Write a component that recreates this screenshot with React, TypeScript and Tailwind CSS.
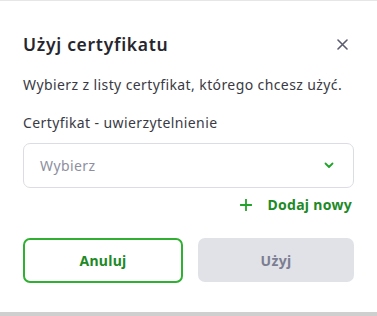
import React from "react";

const green = "#23a32b";

const CertificateModal: React.FC = () => {
  return (
    <div
      className="w-[377px] h-[316px] bg-white border-t border-[#e6e6e6] flex flex-col"
      style={{ fontFamily: "'Noto Sans', Lato, sans-serif" }}
    >
      <div className="flex-1 px-[23px] pt-[30px]">
        {/* Header */}
        <div className="flex items-center justify-between h-[26px]">
          <h1 className="text-[17.5px] font-semibold text-[#26262e] tracking-[0.7px]">Użyj certyfikatu</h1>
          <button className="w-[20px] h-[20px] flex items-center justify-center mr-[2px] text-[#5c5c70]">
            <svg width="11" height="11" viewBox="0 0 11 11" fill="none">
              <path d="M1 1L10 10M10 1L1 10" stroke="currentColor" strokeWidth="1.6" strokeLinecap="round" />
            </svg>
          </button>
        </div>

        <p className="mt-[19px] text-[14px] text-[#3a3a44] leading-[18px] tracking-[0.4px]">
          Wybierz z listy certyfikat, którego chcesz użyć.
        </p>

        <label className="block mt-[20px] text-[14px] text-[#3a3a44] leading-[18px] tracking-[0.4px]">
          Certyfikat - uwierzytelnienie
        </label>

        {/* Select */}
        <div className="mt-[11px] h-[45px] rounded-[7px] border border-[#dcdde3] flex items-center justify-between pl-[16px] pr-[19px]">
          <span className="text-[14px] text-[#8d8fa0] tracking-[0.4px]">Wybierz</span>
          <svg width="10" height="7" viewBox="0 0 10 7" fill="none">
            <path d="M1.5 1.5L5 5L8.5 1.5" stroke={green} strokeWidth="1.8" strokeLinecap="round" strokeLinejoin="round" />
          </svg>
        </div>

        <div className="flex justify-end mt-[6px] pr-[2px]">
          <button className="flex items-center gap-[15px] text-[14px] font-bold text-[#1d8a27] tracking-[0.3px]">
            <svg width="12" height="12" viewBox="0 0 12 12" fill="none">
              <path d="M6 0.5V11.5M0.5 6H11.5" stroke={green} strokeWidth="1.8" strokeLinecap="round" />
            </svg>
            Dodaj nowy
          </button>
        </div>

        {/* Buttons */}
        <div className="flex gap-[15px] mt-[23px]">
          <button className="w-[160px] h-[45px] rounded-[7px] border-2 border-[#2fb032] text-[14px] font-bold text-[#1d8a27] tracking-[0.3px]">
            Anuluj
          </button>
          <button className="flex-1 h-[44px] rounded-[7px] bg-[#e1e2e7] text-[14px] font-bold text-[#7b7e92] tracking-[0.3px]">
            Użyj
          </button>
        </div>
      </div>
      <div className="h-[4px] bg-[#cfcfcf]" />
    </div>
  );
};

export default function App() {
  return <CertificateModal />;
}
